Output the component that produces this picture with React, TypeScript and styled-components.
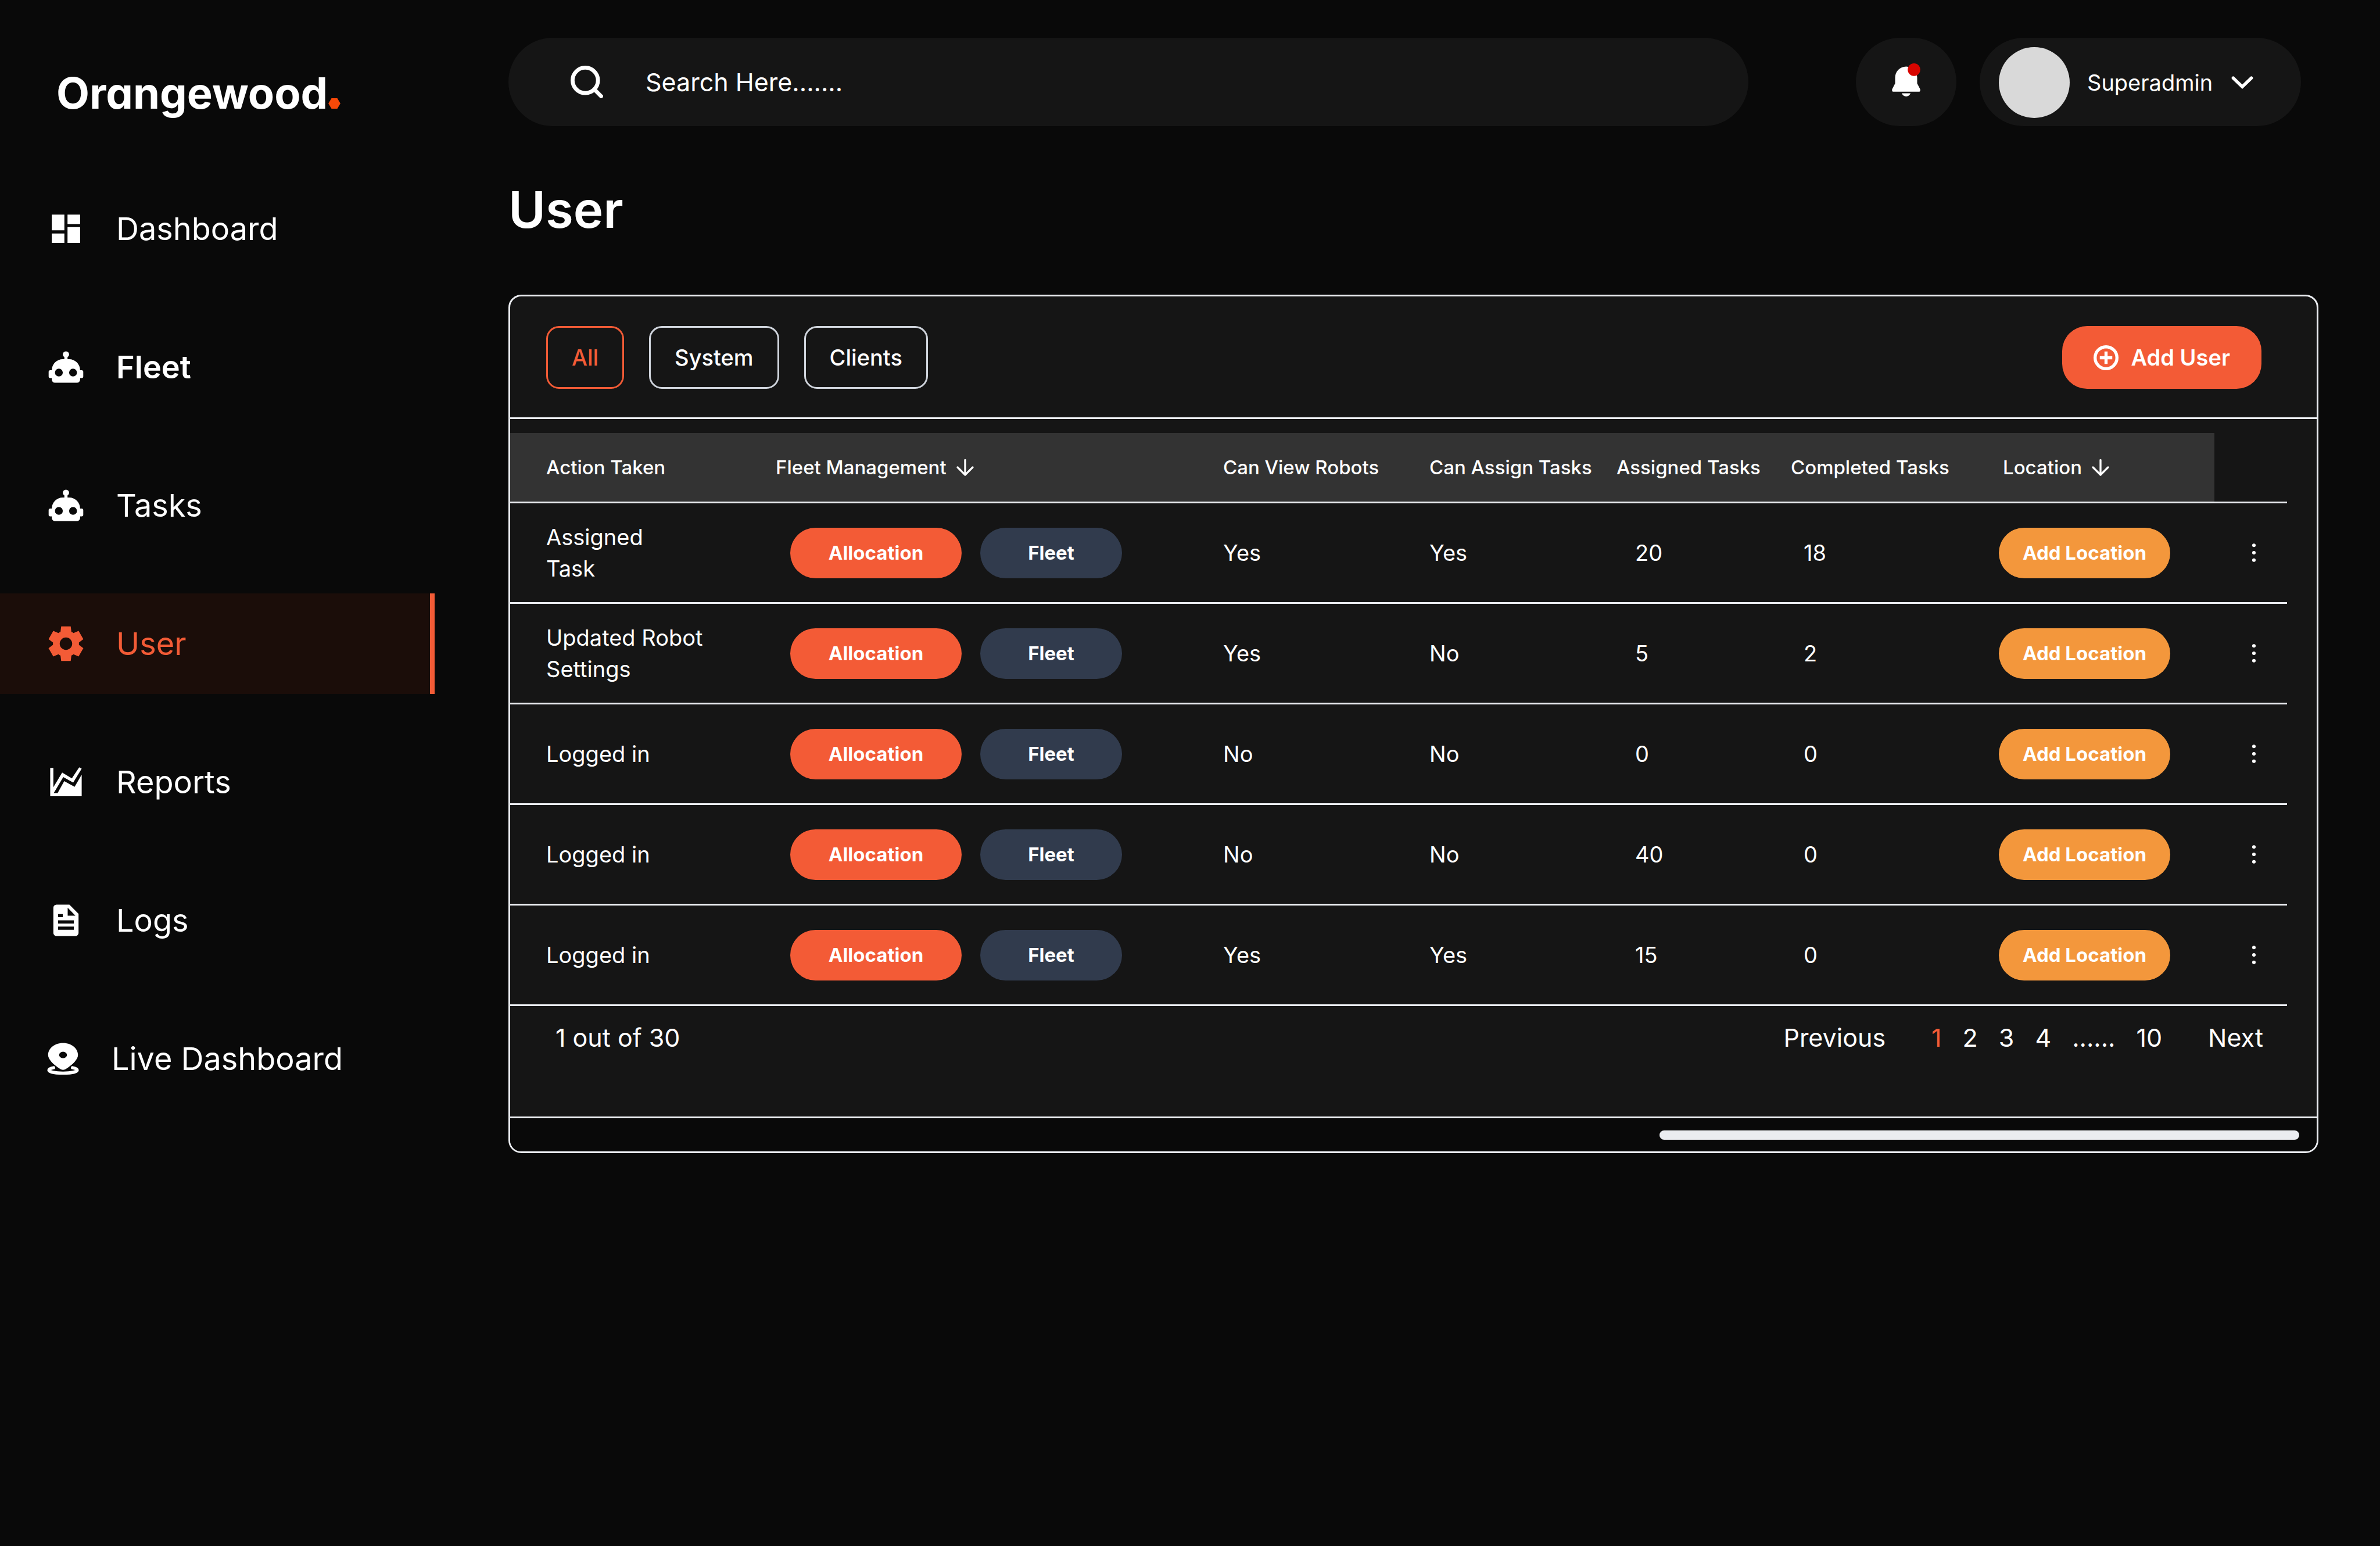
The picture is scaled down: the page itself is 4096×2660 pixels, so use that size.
import React, { useState } from 'react';
import styled, { createGlobalStyle } from 'styled-components';

const color = {
  page: '#090909',
  panel: '#151515',
  head: '#333333',
  accent: '#f35b36',
  activeRow: '#1b0d09',
  slate: '#313b4d',
  amber: '#f3973c',
  line: '#eaecf0',
  outline: '#d0d5dd',
  white: '#ffffff',
  avatar: '#d9d9d9',
  alert: '#d80500',
  logoDot: '#f84908',
};

const GlobalStyle = createGlobalStyle`
  *, *::before, *::after { box-sizing: border-box; }
  body {
    margin: 0;
    background: ${color.page};
    color: ${color.white};
    font-family: Inter, "Liberation Sans", sans-serif;
    font-size: 38px;
  }
  button, input { font: inherit; color: inherit; }
  button { border: 0; padding: 0; margin: 0; background: none; cursor: pointer; }
`;

const Page = styled.div`
  display: flex;
  min-height: 100vh;
`;

/* ---------- sidebar ---------- */

const Sidebar = styled.aside`
  flex: none;
  width: 748px;
  padding-top: 115px;
`;

const Logo = styled.div`
  display: flex;
  align-items: baseline;
  gap: 1px;
  padding-left: 97px;
  font-size: 74px;
  line-height: 90px;
  font-weight: 700;
  font-feature-settings: 'cv11';
`;

const LogoDot = styled.svg`
  width: 21px;
  height: 18px;
`;

const NavList = styled.nav`
  display: flex;
  flex-direction: column;
  gap: 65px;
  margin-top: 102px;
`;

const NavLink = styled.a<{ $active?: boolean; $strong?: boolean; $tight?: boolean }>`
  display: flex;
  align-items: center;
  gap: ${(p) => (p.$tight ? 51 : 54)}px;
  height: 173px;
  padding-left: ${(p) => (p.$tight ? 76 : 81)}px;
  border-right: 8px solid ${(p) => (p.$active ? color.accent : 'transparent')};
  background: ${(p) => (p.$active ? color.activeRow : 'transparent')};
  color: ${(p) => (p.$active ? color.accent : color.white)};
  font-size: 54px;
  line-height: 65px;
  font-weight: ${(p) => (p.$strong ? 600 : 400)};
  text-decoration: none;

  svg { flex: none; width: 65px; height: 65px; }
`;

/* ---------- top bar ---------- */

const Main = styled.main`
  flex: 1;
  min-width: 0;
  padding: 65px 106px 0 127px;
`;

const TopBar = styled.header`
  display: flex;
  align-items: stretch;
  height: 152px;
  padding-right: 30px;
`;

const SearchBox = styled.label`
  flex: 1;
  display: flex;
  align-items: center;
  gap: 73px;
  margin-right: 185px;
  padding: 0 107px;
  border-radius: 76px;
  background: ${color.panel};

  svg { flex: none; width: 56px; height: 56px; }
`;

const SearchInput = styled.input`
  flex: 1;
  min-width: 0;
  padding: 0;
  border: 0;
  outline: 0;
  background: transparent;
  font-size: 43px;
  line-height: 54px;

  &::placeholder { color: ${color.white}; opacity: 1; }
`;

const BellButton = styled.button`
  display: grid;
  place-items: center;
  width: 173px;
  margin-right: 40px;
  border-radius: 76px;
  background: ${color.panel};

  svg { width: 65px; height: 65px; }
`;

const ProfileButton = styled.button`
  display: flex;
  align-items: center;
  width: 553px;
  padding: 2px 0 0 33px;
  border-radius: 76px;
  background: ${color.panel};
  line-height: 54px;
  text-align: left;

  svg { width: 38px; height: 22px; margin-left: 32px; }
`;

const Avatar = styled.span`
  width: 122px;
  height: 122px;
  margin-right: 30px;
  border-radius: 50%;
  background: ${color.avatar};
`;

const Title = styled.h1`
  margin: 91px 0 93px;
  font-size: 87px;
  line-height: 106px;
  font-weight: 600;
`;

/* ---------- panel ---------- */

const Panel = styled.section`
  overflow: hidden;
  border: 3px solid ${color.line};
  border-radius: 22px;
  background: ${color.panel};
`;

const Toolbar = styled.div`
  display: flex;
  align-items: center;
  justify-content: space-between;
  padding: 51px 95px 49px 62px;
  border-bottom: 3px solid ${color.line};
`;

const Tabs = styled.div`
  display: flex;
  gap: 43px;
`;

const Tab = styled.button<{ $active?: boolean }>`
  height: 108px;
  padding: 0 41px;
  border: 3px solid ${(p) => (p.$active ? color.accent : color.outline)};
  border-radius: 22px;
  color: ${(p) => (p.$active ? color.accent : color.white)};
  font-weight: 500;
  line-height: 54px;
`;

const AddUserButton = styled.button`
  display: flex;
  align-items: center;
  gap: 22px;
  height: 108px;
  padding: 0 54px;
  border-radius: 43px;
  background: ${color.accent};
  font-weight: 600;
  line-height: 54px;

  svg { width: 43px; height: 43px; }
`;

const TableWrap = styled.div`
  padding: 24px 52px 0 0;
`;

const Table = styled.table`
  width: 100%;
  table-layout: fixed;
  border-collapse: separate;
  border-spacing: 0;
`;

const HeadCell = styled.th<{ $pad?: number; $plain?: boolean }>`
  height: 121px;
  padding: 0 0 0 ${(p) => p.$pad ?? 0}px;
  border-bottom: 3px solid ${color.line};
  background: ${(p) => (p.$plain ? 'transparent' : color.head)};
  font-size: 33px;
  line-height: 49px;
  font-weight: 500;
  text-align: left;
  white-space: nowrap;
`;

const HeadLabel = styled.span`
  display: inline-flex;
  align-items: center;
  gap: 16px;

  svg { width: 32px; height: 32px; }
`;

const Cell = styled.td<{ $pad?: number }>`
  height: 173px;
  padding: 0 0 0 ${(p) => p.$pad ?? 0}px;
  border-bottom: 3px solid ${color.line};
  line-height: 54px;
  white-space: pre-line;
`;

const PillGroup = styled.div`
  display: flex;
  gap: 32px;
`;

const Pill = styled.button<{ $tone: string; $width: number }>`
  display: block;
  width: ${(p) => p.$width}px;
  height: 87px;
  border-radius: 44px;
  background: ${(p) => p.$tone};
  font-size: 33px;
  line-height: 49px;
  font-weight: 700;
`;

const MenuButton = styled.button`
  display: block;
  width: 54px;
  height: 54px;

  svg { display: block; width: 54px; height: 54px; }
`;

const Footer = styled.div`
  display: flex;
  justify-content: space-between;
  padding: 27px 92px 109px 78px;
  font-size: 43px;
  line-height: 54px;
`;

const Pager = styled.nav`
  display: flex;
  align-items: flex-start;
  gap: 79px;
`;

const PageNumbers = styled.div`
  display: flex;
  gap: 36px;
`;

const PageButton = styled.button<{ $active?: boolean }>`
  line-height: 54px;
  color: ${(p) => (p.$active ? color.accent : color.white)};
`;

const ScrollTrack = styled.div`
  display: flex;
  justify-content: flex-end;
  padding: 21px 30px 20px;
  border-top: 3px solid ${color.line};
  background: ${color.page};
`;

const ScrollThumb = styled.div`
  width: 36.1%;
  height: 16px;
  border-radius: 8px;
  background: ${color.line};
`;

/* ---------- icons ---------- */

const DashboardIcon = () => (
  <svg viewBox="0 0 24 24" fill="currentColor" aria-hidden="true">
    <path d="M3 13h8V3H3v10zm0 8h8v-6H3v6zm10 0h8V11h-8v10zm0-18v6h8V3h-8z" />
  </svg>
);

const RobotIcon = () => (
  <svg viewBox="0 0 24 24" fill="currentColor" aria-hidden="true">
    <path d="M12 2a2 2 0 0 1 2 2c0 .74-.4 1.39-1 1.73V7h1a7 7 0 0 1 7 7h1a1 1 0 0 1 1 1v3a1 1 0 0 1-1 1h-1v1a2 2 0 0 1-2 2H5a2 2 0 0 1-2-2v-1H2a1 1 0 0 1-1-1v-3a1 1 0 0 1 1-1h1a7 7 0 0 1 7-7h1V5.73c-.6-.34-1-.99-1-1.73a2 2 0 0 1 2-2M7.5 13A2.5 2.5 0 0 0 5 15.5 2.5 2.5 0 0 0 7.5 18a2.5 2.5 0 0 0 2.5-2.5A2.5 2.5 0 0 0 7.5 13m9 0a2.5 2.5 0 0 0-2.5 2.5 2.5 2.5 0 0 0 2.5 2.5 2.5 2.5 0 0 0 2.5-2.5 2.5 2.5 0 0 0-2.5-2.5" />
  </svg>
);

const GearIcon = () => (
  <svg viewBox="1.1 1.1 21.8 21.8" fill="currentColor" aria-hidden="true">
    <path d="m9.25 22-.4-3.2q-.325-.125-.612-.3t-.563-.375L4.7 19.375l-2.75-4.75 2.575-1.95Q4.5 12.5 4.5 12.338v-.675q0-.163.025-.338L1.95 9.375l2.75-4.75 2.975 1.25q.275-.2.575-.375t.6-.3l.4-3.2h5.5l.4 3.2q.325.125.613.3t.562.375l2.975-1.25 2.75 4.75-2.575 1.95q.025.175.025.338v.674q0 .163-.025.338l2.575 1.95-2.75 4.75-2.975-1.25q-.275.2-.575.375t-.6.3l-.4 3.2zm2.75-6.4a3.6 3.6 0 1 0 0-7.2 3.6 3.6 0 0 0 0 7.2" />
  </svg>
);

const ReportsIcon = () => (
  <svg viewBox="0 0 24 24" fill="currentColor" aria-hidden="true">
    <path d="M2 3h2v12.3L9.6 6l6.15 3.7 4.65-7 1.6.8-5.4 8.9-6.3-3.55L4.25 19H6.7l4.2-7.6 6.6 3.6L22 7.3V21H2z" />
  </svg>
);

const LogsIcon = () => (
  <svg viewBox="0 0 24 24" fill="currentColor" fillRule="evenodd" aria-hidden="true">
    <path d="M6 2h8.2L20 7.8V20a2 2 0 0 1-2 2H6a2 2 0 0 1-2-2V4a2 2 0 0 1 2-2zm7.1 2v5H18zM7 8v2h3V8zm0 4v2h10v-2zm0 4v2h10v-2z" />
  </svg>
);

const LiveIcon = () => (
  <svg viewBox="0 0 96 96" fill="currentColor" aria-hidden="true">
    <path
      fillRule="evenodd"
      d="M48 8C69 8 86 21.5 86 38.5 86 50 73 63 54 75Q48 78 42 75C23 63 10 50 10 38.5 10 21.5 27 8 48 8zM48 30.3a10 8.3 0 1 0 0 16.6 10 8.3 0 1 0 0-16.6z"
    />
    <path
      d="M24 71C15 72.5 12 74.5 12 77 12 81.5 28 84.7 48 84.7S84 81.5 84 77C84 74.5 81 72.5 72 71"
      fill="none"
      stroke="currentColor"
      strokeWidth="8"
      strokeLinecap="round"
    />
  </svg>
);

const SearchIcon = () => (
  <svg viewBox="0 0 82 82" fill="none" stroke="currentColor" strokeWidth="10" strokeLinecap="round" aria-hidden="true">
    <circle cx="37" cy="37" r="32" />
    <path d="M61 61 77 77" />
  </svg>
);

const BellIcon = () => (
  <svg viewBox="0 0 96 96" fill="currentColor" aria-hidden="true">
    <path d="M48 8C63.5 8 76 20.5 76 36V51L83.5 65.5Q85 72 80 72H16Q11 72 12.5 65.5L20 51V36C20 20.5 32.5 8 48 8z" />
    <path d="M36.7 76H59.3C57 81 53 84 48 84S39 81 36.7 76z" />
    <circle cx="68" cy="16" r="16" fill={color.alert} />
  </svg>
);

const ChevronIcon = () => (
  <svg viewBox="0 0 56 32" fill="none" stroke="currentColor" strokeWidth="8" strokeLinecap="round" aria-hidden="true">
    <path d="M5 4.5 28 26.5 51 4.5" />
  </svg>
);

const PlusCircleIcon = () => (
  <svg viewBox="0 0 64 64" fill="none" stroke="currentColor" strokeWidth="8" aria-hidden="true">
    <circle cx="32" cy="32" r="28" />
    <path d="M32 16V48M16 32H48" />
  </svg>
);

const ArrowDownIcon = () => (
  <svg viewBox="0 0 48 48" fill="none" stroke="currentColor" strokeWidth="5" strokeLinecap="round" strokeLinejoin="round" aria-hidden="true">
    <path d="M24 5V43M4.5 24 24 43.5 43.5 24" />
  </svg>
);

const DotsIcon = () => (
  <svg viewBox="0 0 80 80" fill="currentColor" aria-hidden="true">
    <circle cx="40" cy="21" r="4.5" />
    <circle cx="40" cy="40" r="4.5" />
    <circle cx="40" cy="59" r="4.5" />
  </svg>
);

/* ---------- data ---------- */

const navItems = [
  { label: 'Dashboard', Icon: DashboardIcon },
  { label: 'Fleet', Icon: RobotIcon, strong: true },
  { label: 'Tasks', Icon: RobotIcon },
  { label: 'User', Icon: GearIcon, active: true },
  { label: 'Reports', Icon: ReportsIcon },
  { label: 'Logs', Icon: LogsIcon },
  { label: 'Live Dashboard', Icon: LiveIcon, tight: true },
];

const columns = [
  { label: 'Action Taken', width: 457, pad: 62 },
  { label: 'Fleet Management', width: 770, pad: 0, sortable: true },
  { label: 'Can View Robots', width: 355, pad: 0 },
  { label: 'Can Assign Tasks', width: 322, pad: 0 },
  { label: 'Assigned Tasks', width: 300, pad: 0 },
  { label: 'Completed Tasks', width: 358, pad: 0 },
  { label: 'Location', width: 371, pad: 7, sortable: true },
];

const rows = [
  { action: 'Assigned\nTask', view: 'Yes', assign: 'Yes', assigned: 20, completed: 18 },
  { action: 'Updated Robot\nSettings', view: 'Yes', assign: 'No', assigned: 5, completed: 2 },
  { action: 'Logged in', view: 'No', assign: 'No', assigned: 0, completed: 0 },
  { action: 'Logged in', view: 'No', assign: 'No', assigned: 40, completed: 0 },
  { action: 'Logged in', view: 'Yes', assign: 'Yes', assigned: 15, completed: 0 },
];

const tabs = ['All', 'System', 'Clients'];

export default function App() {
  const [tab, setTab] = useState('All');
  const [page, setPage] = useState(1);

  return (
    <>
      <GlobalStyle />
      <Page>
        <Sidebar>
          <Logo>
            Orangewood
            <LogoDot viewBox="0 0 31 27" aria-hidden="true">
              <path d="M8 0H23L31 13.5 23 27H8L0 13.5z" fill={color.logoDot} />
            </LogoDot>
          </Logo>
          <NavList>
            {navItems.map(({ label, Icon, active, strong, tight }) => (
              <NavLink key={label} href="#" $active={active} $strong={strong} $tight={tight}>
                <Icon />
                {label}
              </NavLink>
            ))}
          </NavList>
        </Sidebar>

        <Main>
          <TopBar>
            <SearchBox>
              <SearchIcon />
              <SearchInput type="text" placeholder="Search Here......." aria-label="Search" />
            </SearchBox>
            <BellButton aria-label="Notifications">
              <BellIcon />
            </BellButton>
            <ProfileButton>
              <Avatar />
              Superadmin
              <ChevronIcon />
            </ProfileButton>
          </TopBar>

          <Title>User</Title>

          <Panel>
            <Toolbar>
              <Tabs>
                {tabs.map((name) => (
                  <Tab key={name} $active={name === tab} onClick={() => setTab(name)}>
                    {name}
                  </Tab>
                ))}
              </Tabs>
              <AddUserButton>
                <PlusCircleIcon />
                Add User
              </AddUserButton>
            </Toolbar>

            <TableWrap>
              <Table>
                <colgroup>
                  {columns.map((c) => (
                    <col key={c.label} width={c.width} />
                  ))}
                  <col width={125} />
                </colgroup>
                <thead>
                  <tr>
                    {columns.map((c) => (
                      <HeadCell key={c.label} scope="col" $pad={c.pad}>
                        <HeadLabel>
                          {c.label}
                          {c.sortable && <ArrowDownIcon />}
                        </HeadLabel>
                      </HeadCell>
                    ))}
                    <HeadCell scope="col" $plain aria-label="Row menu" />
                  </tr>
                </thead>
                <tbody>
                  {rows.map((row, i) => (
                    <tr key={i}>
                      <Cell $pad={62}>{row.action}</Cell>
                      <Cell $pad={25}>
                        <PillGroup>
                          <Pill $tone={color.accent} $width={295}>Allocation</Pill>
                          <Pill $tone={color.slate} $width={244}>Fleet</Pill>
                        </PillGroup>
                      </Cell>
                      <Cell>{row.view}</Cell>
                      <Cell>{row.assign}</Cell>
                      <Cell $pad={32}>{row.assigned}</Cell>
                      <Cell $pad={22}>{row.completed}</Cell>
                      <Cell>
                        <Pill $tone={color.amber} $width={295}>Add Location</Pill>
                      </Cell>
                      <Cell $pad={41}>
                        <MenuButton aria-label="Row actions">
                          <DotsIcon />
                        </MenuButton>
                      </Cell>
                    </tr>
                  ))}
                </tbody>
              </Table>
            </TableWrap>

            <Footer>
              <span>1 out of 30</span>
              <Pager aria-label="Pagination">
                <PageButton>Previous</PageButton>
                <PageNumbers>
                  {[1, 2, 3, 4].map((n) => (
                    <PageButton key={n} $active={n === page} onClick={() => setPage(n)}>
                      {n}
                    </PageButton>
                  ))}
                  <span>......</span>
                  <PageButton $active={page === 10} onClick={() => setPage(10)}>10</PageButton>
                </PageNumbers>
                <PageButton>Next</PageButton>
              </Pager>
            </Footer>

            <ScrollTrack>
              <ScrollThumb />
            </ScrollTrack>
          </Panel>
        </Main>
      </Page>
    </>
  );
}
